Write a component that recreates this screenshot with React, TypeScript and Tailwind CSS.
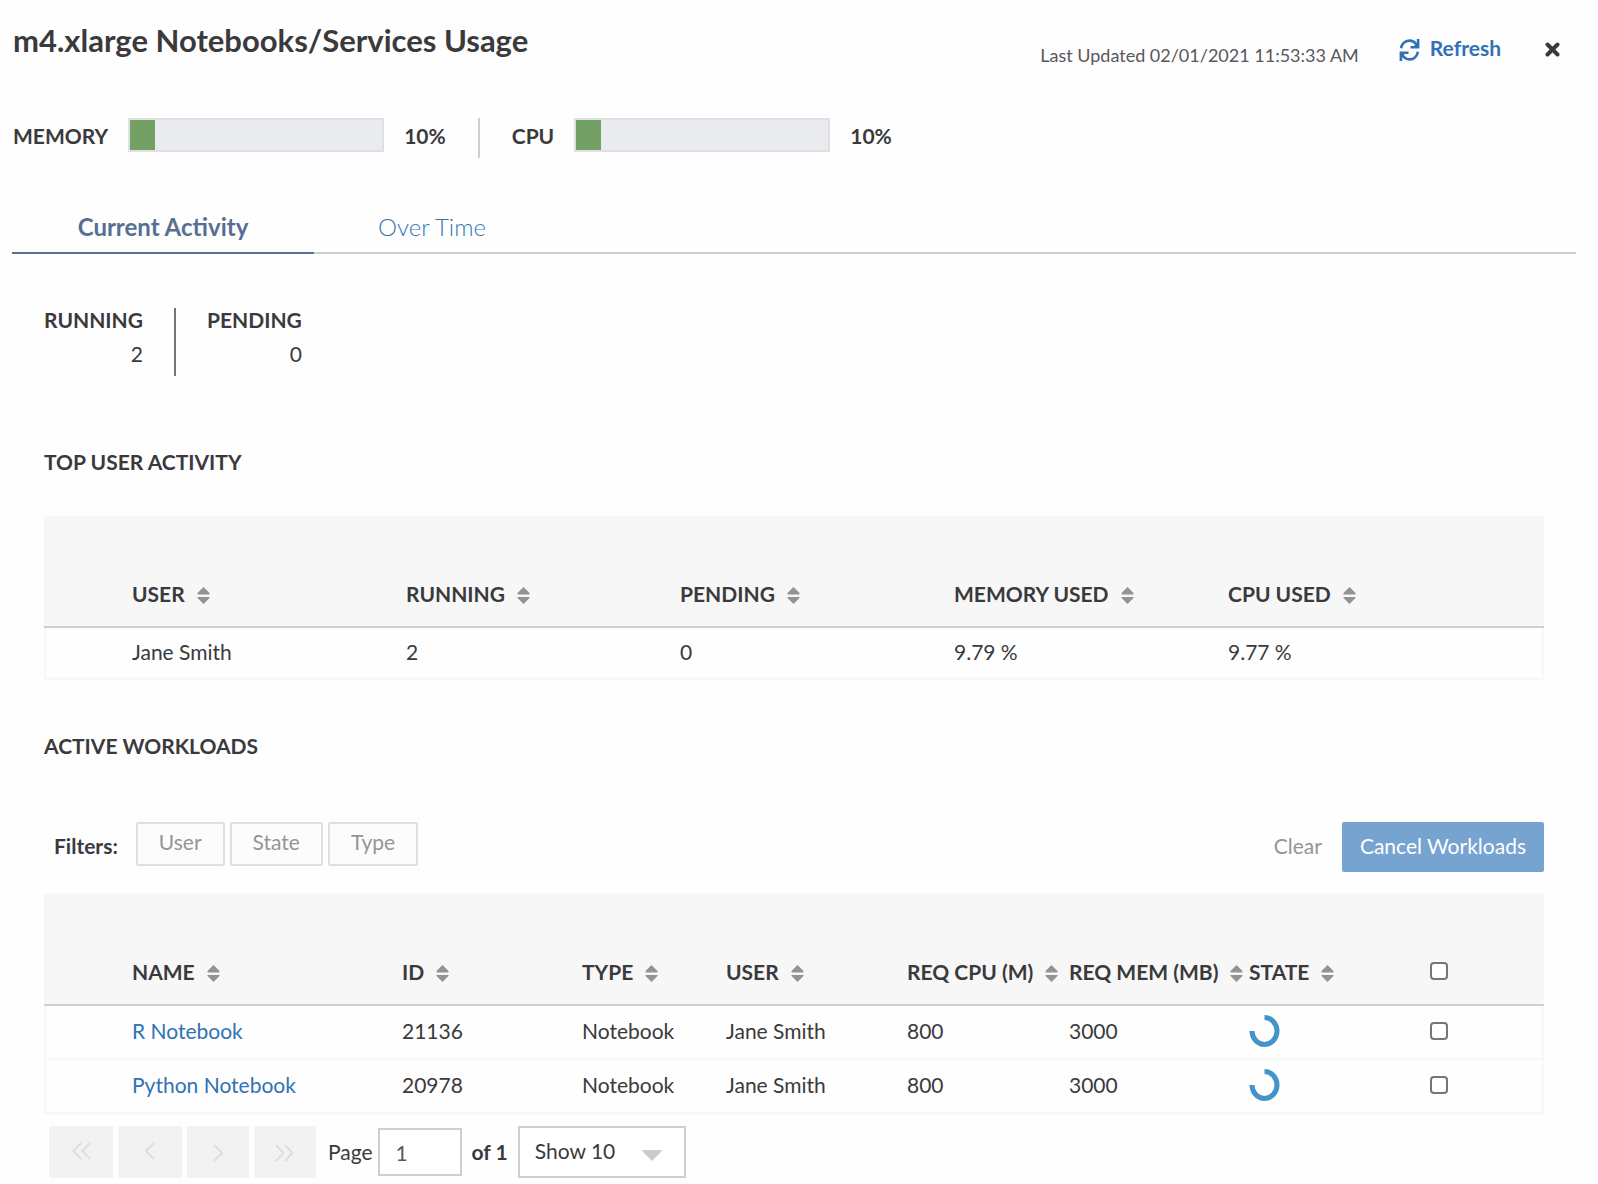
import { useState } from 'react';

interface Column {
  label: string;
  width: string;
}

interface Workload {
  id: string;
  name: string;
  type: string;
  user: string;
  cpu: number;
  mem: number;
}

const USER_COLUMNS: Column[] = [
  { label: 'USER', width: 'w-[274px]' },
  { label: 'RUNNING', width: 'w-[274px]' },
  { label: 'PENDING', width: 'w-[274px]' },
  { label: 'MEMORY USED', width: 'w-[274px]' },
  { label: 'CPU USED', width: '' },
];

const WORKLOAD_COLUMNS: Column[] = [
  { label: 'NAME', width: 'w-[270px]' },
  { label: 'ID', width: 'w-[180px]' },
  { label: 'TYPE', width: 'w-[144px]' },
  { label: 'USER', width: 'w-[181px]' },
  { label: 'REQ CPU (M)', width: 'w-[162px]' },
  { label: 'REQ MEM (MB)', width: 'w-[180px]' },
  { label: 'STATE', width: '' },
];

const WORKLOADS: Workload[] = [
  { id: '21136', name: 'R Notebook', type: 'Notebook', user: 'Jane Smith', cpu: 800, mem: 3000 },
  { id: '20978', name: 'Python Notebook', type: 'Notebook', user: 'Jane Smith', cpu: 800, mem: 3000 },
];

function RefreshIcon() {
  return (
    <svg width="21" height="22" viewBox="0 0 20 22" className="mt-1" fill="none" stroke="currentColor" strokeWidth="2.600">
      <path d="M1.600 9.300C2.300 4.800 5.500 1.600 9.800 1.600c3.200 0 5.800 1.600 7.600 4.800" />
      <path d="M18.400 12.700C17.700 17.200 14.500 20.400 10.200 20.400c-3.200 0-5.800-1.600-7.600-4.800" />
      <path d="M18.600 0v8.200h-7.600M1.400 22v-8.200h7.600" />
      <path d="M18.600 3v5.200h-5.200zM1.400 19v-5.200h5.200z" fill="currentColor" stroke="none" />
    </svg>
  );
}

function CloseIcon() {
  return (
    <svg
      width="15"
      height="15"
      viewBox="0 0 15 15"
      fill="none"
      stroke="currentColor"
      strokeWidth="4"
      strokeLinecap="round"
    >
      <path d="M2.500 2.500l10 10M12.500 2.500l-10 10" />
    </svg>
  );
}

function SortIcon() {
  return (
    <svg width="13" height="17" viewBox="0 0 13 17" className="mt-1 shrink-0" fill="#939393">
      <path d="M6.500 0L12.500 6v1.500H.500V6z" />
      <path d="M6.500 17L12.500 11V10H.500v1z" />
    </svg>
  );
}

function Spinner() {
  return (
    <svg width="31" height="32" viewBox="0 0 31 32" className="block" fill="none" stroke="#4493cb" strokeWidth="5">
      <path d="M15.500 2.500A12.500 13.500 0 1 1 3 16" />
    </svg>
  );
}

function Chevrons({ d }: { d: string }) {
  return (
    <svg width="20" height="18" viewBox="0 0 20 18" fill="none" stroke="#dedede" strokeWidth="2">
      <path d={d} />
    </svg>
  );
}

/** Usage bar with its label on the left and the percentage on the right. */
function Meter({ label, value }: { label: string; value: number }) {
  return (
    <div className="flex h-[34px] items-center font-bold">
      <span className="pt-0.5">{label}</span>
      <div className="mx-5 h-[34px] w-64 border-2 border-[#dfe0e4] bg-[#eaebef]">
        <div className="h-full bg-[#72a065]" style={{ width: `${value}%` }} />
      </div>
      <span className="pt-0.5">{value}%</span>
    </div>
  );
}

function Count({ label, value }: { label: string; value: number }) {
  return (
    <div className="-mt-[5px] text-right leading-[34px]">
      <p className="font-bold">{label}</p>
      <p>{value}</p>
    </div>
  );
}

function HeaderCells({ columns }: { columns: Column[] }) {
  return (
    <>
      <th className="w-[87px]" />
      {columns.map((c) => (
        <th key={c.label} className={`${c.width} pb-[17px] text-left align-bottom font-bold`}>
          <button className="flex items-center gap-3 whitespace-nowrap">
            {c.label}
            <SortIcon />
          </button>
        </th>
      ))}
    </>
  );
}

const CHECKBOX =
  'block size-[18px] appearance-none rounded-[4px] border-2 border-[#767676] bg-white checked:bg-[#3277b5]';
const FILTER = 'h-11 rounded-[2px] border-2 border-[#dfdfdf] bg-[#fcfcfc] px-[21px] pb-1 text-[#959595]';
const TABLE = 'w-full table-fixed border-collapse border-2 border-[#f7f7f7] [&_td]:pb-0.5';
const PAGER = 'flex h-[52px] items-center justify-center rounded-[2px] bg-[#f2f2f2]';

export default function App() {
  const [tab, setTab] = useState<'current' | 'time'>('current');
  const [selected, setSelected] = useState<string[]>([]);

  const toggle = (id: string): void =>
    setSelected((s) => (s.includes(id) ? s.filter((x) => x !== id) : [...s, id]));
  const toggleAll = (): void =>
    setSelected((s) => (s.length === WORKLOADS.length ? [] : WORKLOADS.map((w) => w.id)));

  const tabClass = (name: string): string =>
    tab === name
      ? 'border-[#566f93] font-bold text-[#566f93]'
      : 'border-transparent font-light text-[#3277b5]';

  return (
    <main className="min-h-screen bg-[#fefefe] pl-3 pr-[22px] font-['Lato',sans-serif] text-[21px] text-[#3a3a3c]">
      <header className="flex h-[118px] items-start justify-between pl-px pt-5">
        <h1 className="text-[31px] font-bold leading-10">m4.xlarge Notebooks/Services Usage</h1>
        <div className="flex items-center pr-4 pt-[10px]">
          <span className="pt-[11px] text-lg text-[#58585a]">Last Updated 02/01/2021 11:53:33 AM</span>
          <button className="ml-10 flex items-center gap-[10px] pb-1 font-bold text-[#3072b3]">
            <RefreshIcon />
            Refresh
          </button>
          <button aria-label="Close" className="ml-11">
            <CloseIcon />
          </button>
        </div>
      </header>

      <section className="flex h-10 items-start pl-px">
        <Meter label="MEMORY" value={10} />
        <div className="mx-8 h-10 w-0.5 bg-[#cfcfcf]" />
        <Meter label="CPU" value={10} />
      </section>

      <nav className="mt-[42px] flex h-[54px] text-2xl shadow-[inset_0_-2px_0_#cfcfcf]">
        <button className={`w-[302px] border-b-2 pt-0.5 ${tabClass('current')}`} onClick={() => setTab('current')}>
          Current Activity
        </button>
        <button className={`w-[236px] border-b-2 pt-0.5 ${tabClass('time')}`} onClick={() => setTab('time')}>
          Over Time
        </button>
      </nav>

      <div className="px-8">
        {/* ===== COUNTS ===== */}
        <section className="mt-[54px] flex h-[68px]">
          <Count label="RUNNING" value={2} />
          <div className="mx-[31px] w-0.5 bg-[#6f757c]" />
          <Count label="PENDING" value={0} />
        </section>

        {/* ===== TOP USER ACTIVITY ===== */}
        <h2 className="mt-[70px] font-bold leading-8">TOP USER ACTIVITY</h2>
        <table className={`${TABLE} mt-[38px]`}>
          <thead className="border-b-2 border-[#cecfd1] bg-[#f7f7f7]">
            <tr className="h-[110px]">
              <HeaderCells columns={USER_COLUMNS} />
            </tr>
          </thead>
          <tbody>
            <tr className="h-[52px]">
              <td />
              <td>Jane Smith</td>
              <td>2</td>
              <td>0</td>
              <td>9.79 %</td>
              <td>9.77 %</td>
            </tr>
          </tbody>
        </table>

        {/* ===== ACTIVE WORKLOADS ===== */}
        <h2 className="mt-[50px] font-bold leading-8">ACTIVE WORKLOADS</h2>
        <div className="mt-[60px] flex items-start justify-between">
          <div className="flex pl-[10px]">
            <span className="mr-[18px] pt-2 font-bold">Filters:</span>
            <div className="flex gap-[5px]">
              <button className={FILTER}>User</button>
              <button className={FILTER}>State</button>
              <button className={FILTER}>Type</button>
            </div>
          </div>
          <div className="flex items-center gap-5">
            <button className="pb-0.5 text-[#959595]" onClick={() => setSelected([])}>
              Clear
            </button>
            <button className="h-[50px] rounded-[2px] bg-[#76a3d0] px-[18px] pb-0.5 text-white">
              Cancel Workloads
            </button>
          </div>
        </div>
        <table className={`${TABLE} mt-[22px]`}>
          <thead className="border-b-2 border-[#cecfd1] bg-[#f7f7f7]">
            <tr className="h-[110px]">
              <HeaderCells columns={WORKLOAD_COLUMNS} />
              <th className="w-[113px] pb-6 align-bottom">
                <input
                  type="checkbox"
                  aria-label="Select all workloads"
                  className={CHECKBOX}
                  checked={selected.length === WORKLOADS.length}
                  onChange={toggleAll}
                />
              </th>
            </tr>
          </thead>
          <tbody>
            {WORKLOADS.map((w) => (
              <tr key={w.id} className="h-[54px] border-b-2 border-[#f7f7f7]">
                <td />
                <td>
                  <a href="#" className="text-[#3072b3]">
                    {w.name}
                  </a>
                </td>
                <td>{w.id}</td>
                <td>{w.type}</td>
                <td>{w.user}</td>
                <td>{w.cpu}</td>
                <td>{w.mem}</td>
                <td>
                  <Spinner />
                </td>
                <td>
                  <input
                    type="checkbox"
                    aria-label={`Select ${w.name}`}
                    className={CHECKBOX}
                    checked={selected.includes(w.id)}
                    onChange={() => toggle(w.id)}
                  />
                </td>
              </tr>
            ))}
          </tbody>
        </table>

        {/* ===== PAGER ===== */}
        <div className="mt-3 flex items-center pl-[5px]">
          <div className="flex gap-[5px]">
            <button aria-label="First page" className={`${PAGER} w-16 pb-0.5`}>
              <Chevrons d="M10 1L2.500 9L10 17M19 1L11.500 9L19 17" />
            </button>
            <button aria-label="Previous page" className={`${PAGER} w-16 pb-0.5`}>
              <Chevrons d="M14 1L6 9L14 17" />
            </button>
            <button aria-label="Next page" className={`${PAGER} w-[62px] pt-0.5`}>
              <Chevrons d="M6 1L14 9L6 17" />
            </button>
            <button aria-label="Last page" className={`${PAGER} w-[62px] pt-0.5`}>
              <Chevrons d="M1 1L8.500 9L1 17M10 1L17.500 9L10 17" />
            </button>
          </div>
          <label htmlFor="page" className="ml-3">
            Page
          </label>
          <input
            id="page"
            defaultValue="1"
            className="ml-[5px] h-12 w-[84px] border-2 border-[#cfcfcf] bg-white px-4 text-[#58585a]"
          />
          <span className="mx-[10px] font-bold">of 1</span>
          <div className="relative">
            <select
              aria-label="Rows per page"
              className="h-[52px] w-[168px] appearance-none border-2 border-[#cfcfcf] bg-white pb-0.5 pl-[15px]"
            >
              <option>Show 10</option>
              <option>Show 25</option>
            </select>
            <svg
              width="20"
              height="12"
              viewBox="0 0 20 12"
              className="pointer-events-none absolute right-6 top-6"
              fill="#cbcbcb"
            >
              <path d="M.500 0h19v1.500L10 11 .500 1.500z" />
            </svg>
          </div>
        </div>
      </div>
    </main>
  );
}
